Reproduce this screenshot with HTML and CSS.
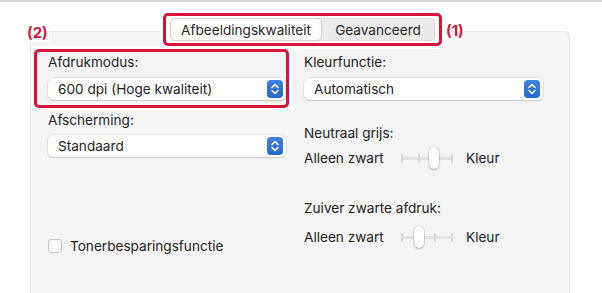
FILE: index.html
```html
<!DOCTYPE html>
<html>
<head>
<meta charset="UTF-8">
<title>Afdrukinstellingen</title>
<link rel="stylesheet" href="styles.css">
</head>
<body>

<div class="topline"></div>

<div class="tabrow">
	<div class="tabs marked">
		<span class="callout callout-tabs">(1)</span>
		<div class="seg">
			<span class="tab active">Afbeeldingskwaliteit</span>
			<span class="tab">Geavanceerd</span>
		</div>
	</div>
</div>

<div class="panel">
	<div class="col col-left">
		<div class="field marked">
			<span class="callout callout-field">(2)</span>
			<div class="label">Afdrukmodus:</div>
			<div class="select">600 dpi (Hoge kwaliteit)<span class="stepper"><svg width="16" height="18" viewBox="0 0 16 18"><path d="M5 7.5L8 4.5L11 7.5M5 10.5L8 13.5L11 10.5" fill="none" stroke="#fff" stroke-width="1.6" stroke-linecap="round" stroke-linejoin="round"/></svg></span></div>
		</div>
		<div class="label plain gap-s">Afscherming:</div>
		<div class="select plain gap-m">Standaard<span class="stepper"><svg width="16" height="18" viewBox="0 0 16 18"><path d="M5 7.5L8 4.5L11 7.5M5 10.5L8 13.5L11 10.5" fill="none" stroke="#fff" stroke-width="1.6" stroke-linecap="round" stroke-linejoin="round"/></svg></span></div>
		<label class="check plain">
			<span class="box"></span>
			<span>Tonerbesparingsfunctie</span>
		</label>
	</div>

	<div class="col col-right">
		<div class="label">Kleurfunctie:</div>
		<div class="select gap-m">Automatisch<span class="stepper"><svg width="16" height="18" viewBox="0 0 16 18"><path d="M5 7.5L8 4.5L11 7.5M5 10.5L8 13.5L11 10.5" fill="none" stroke="#fff" stroke-width="1.6" stroke-linecap="round" stroke-linejoin="round"/></svg></span></div>

		<div class="label gap-l">Neutraal grijs:</div>
		<div class="slider-row first">
			<span class="end-label">Alleen zwart</span>
			<div class="slider">
				<span class="track"></span>
				<span class="tick t0"></span><span class="tick t1"></span><span class="tick t2"></span><span class="tick t3"></span>
				<span class="thumb pos-2"></span>
			</div>
			<span>Kleur</span>
		</div>

		<div class="label gap-xl">Zuiver zwarte afdruk:</div>
		<div class="slider-row second">
			<span class="end-label">Alleen zwart</span>
			<div class="slider">
				<span class="track"></span>
				<span class="tick t0"></span><span class="tick t1"></span><span class="tick t2"></span><span class="tick t3"></span>
				<span class="thumb pos-1"></span>
			</div>
			<span>Kleur</span>
		</div>
	</div>
</div>

</body>
</html>
```

FILE: styles.css
```css
* {box-sizing: border-box}

body {
	margin: 0;
	height: 293px;
	overflow: hidden;
	background: #fff;
	font-family: Inter, "Liberation Sans", sans-serif;
	font-size: 13.6px;
	color: #222;
}

.topline {
	height: 2px;
	background: #d6d6d6;
}

/* red annotation boxes */
.marked {
	position: relative;
	border: 3px solid #d9143a;
	border-radius: 5px;
	box-shadow: 0 0 0 3px #fff;
}

.callout {
	position: absolute;
	color: #d9143a;
	font-weight: bold;
	font-size: 15px;
	line-height: 18px;
	background: #fff;
}

.callout-tabs {left: calc(100% + 7px); top: 6px}
.callout-field {left: -11px; top: -28px; padding: 0 1px}

.tabrow {
	position: relative;
	z-index: 1;
	margin-top: 11px;
	padding-left: 163px;
	display: flex;
}

.tabs {
	padding: 2px 4px;
	background: #fff;
}

.seg {
	display: flex;
	height: 23px;
	background: #ebebeb;
	border: 1px solid #dadada;
	border-radius: 5px;
}

.tab {
	display: flex;
	align-items: center;
	justify-content: center;
	width: 112px;
	color: #262626;
}

.tab.active {
	width: 152px;
	margin: -1px 0 -1px -1px;
	background: #fff;
	border: 1px solid #d2d2d2;
	border-radius: 5px;
	box-shadow: 0 1px 1px rgba(0,0,0,.06);
}

/* panel runs on past the bottom edge, so no bottom border */
.panel {
	margin: -15px 0 0 30px;
	width: 540px;
	height: 262px;
	background: #f4f4f4;
	border: 1px solid #e4e4e4;
	border-bottom: none;
	border-radius: 6px 6px 0 0;
	padding: 17px 0 0 3px;
	display: flex;
	gap: 15px;
}

.col {display: flex; flex-direction: column}
.col-left {width: 255px}
.col-right {width: 239px; padding-top: 5px}

.field {
	padding: 2px 0 5px 11px;
}

.label {line-height: 16px}

.plain {margin-left: 14px}

.gap-s {margin-top: 4px}
.gap-m {margin-top: 7px}
.gap-l {margin-top: 25px}
.gap-xl {margin-top: 30px}

.field .select {margin-top: 8px}
.col-right .select {margin-top: 8px}

.select {
	position: relative;
	width: 238px;
	height: 22px;
	line-height: 22px;
	padding-left: 10px;
	background: #fff;
	border-radius: 5px;
	box-shadow: 0 0 0 0.5px rgba(0,0,0,.14), 0 1px 1.5px rgba(0,0,0,.12);
}

.col-right .select {width: 239px}

.stepper {
	position: absolute;
	right: 3px;
	top: 2px;
	width: 16px;
	height: 18px;
	border-radius: 4px;
	background: linear-gradient(#3d82e3, #2866cc);
	display: flex;
}

.check {
	margin-top: 81px;
	display: flex;
	align-items: center;
	gap: 8px;
	line-height: 16px;
}

.check .box {
	width: 14px;
	height: 14px;
	background: #fff;
	border: 1px solid #c5c5c5;
	border-radius: 3px;
}

.slider-row {
	display: flex;
	align-items: center;
	height: 24px;
}

.slider-row.first {margin-top: 5px}
.slider-row.second {margin-top: 9px}

.end-label {width: 97px}

.slider {
	position: relative;
	width: 52px;
	height: 24px;
	margin-right: 13px;
}

.track {
	position: absolute;
	left: 0;
	right: 0;
	top: 11px;
	height: 3px;
	background: #e2e2e2;
	border-radius: 2px;
}

.tick {
	position: absolute;
	top: 8px;
	width: 2px;
	height: 9px;
	background: #d9d9d9;
	border-radius: 1px;
}

.t0 {left: 0}
.t1 {left: 17px}
.t2 {left: 33px}
.t3 {left: 50px}

.thumb {
	position: absolute;
	top: 1px;
	width: 10px;
	height: 22px;
	background: #fff;
	border-radius: 5px;
	box-shadow: 0 0 0 0.5px rgba(0,0,0,.18), 0 1px 2px rgba(0,0,0,.2);
}

.pos-1 {left: 13px}
.pos-2 {left: 28px}
```
